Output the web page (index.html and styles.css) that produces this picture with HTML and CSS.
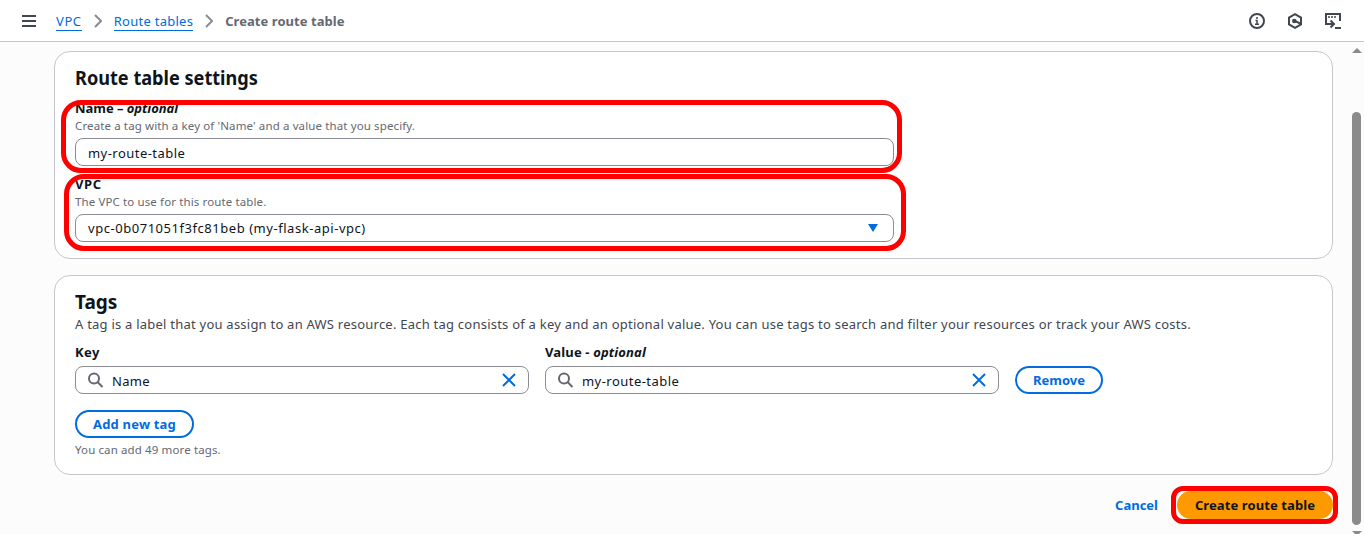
FILE: index.html
```html
<!DOCTYPE html>
<html lang="en">
<head>
<meta charset="utf-8">
<title>Create route table</title>
<link rel="stylesheet" href="styles.css">
</head>
<body>
<header class="topbar">
  <svg class="menu" width="14" height="12" viewBox="0 0 14 12"><path d="M0 1h14M0 6h14M0 11h14"/></svg>
  <nav class="crumbs">
    <a class="crumb-vpc" href="#">VPC</a>
    <svg width="8" height="14" viewBox="0 0 8 14"><path d="M1 1l6 6-6 6"/></svg>
    <a class="crumb-tables" href="#">Route tables</a>
    <svg width="8" height="14" viewBox="0 0 8 14"><path d="M1 1l6 6-6 6"/></svg>
    <span class="crumb-current">Create route table</span>
  </nav>
  <div class="tools">
    <svg width="16" height="16" viewBox="0 0 16 16"><circle cx="8" cy="8" r="7"/><path d="M8 4v2M6.500 7.500H8V12M6 11.300h4" stroke-width="1.500"/></svg>
    <svg width="16" height="16" viewBox="0 0 16 16"><path d="M14 11.400V4.600L8 1.200 2 4.600v6.800l6 3.400z"/><circle class="solid" cx="7.300" cy="8" r="2.300"/><path d="M8 8l5.500 2.700"/></svg>
    <svg width="16" height="16" viewBox="0 0 16 16"><path d="M5 11H1V1h14v7M10 15h6"/><path d="M3 4h2M6 4h2M9 4h2" stroke-width="1.600"/><path d="M4 11h5M5.500 7.500L9 11l-3.500 3.500"/></svg>
  </div>
</header>
<main class="content">
  <section class="card settings">
    <h2 class="title-settings">Route table settings</h2>
    <div class="field">
      <label class="label-name">Name – <i>optional</i></label>
      <p class="hint hint-name">Create a tag with a key of 'Name' and a value that you specify.</p>
      <div class="input"><span class="val-route">my-route-table</span></div>
    </div>
    <div class="field">
      <label class="label-vpc">VPC</label>
      <p class="hint hint-vpc">The VPC to use for this route table.</p>
      <div class="input select"><span class="val-vpc">vpc-0b071051f3fc81beb (my-flask-api-vpc)</span>
        <svg class="caret" width="10" height="8" viewBox="0 0 10 8"><path d="M0 0h10L5 8z"/></svg></div>
    </div>
    <div class="mark mark-name"></div>
    <div class="mark mark-vpc"></div>
  </section>
  <section class="card tags">
    <h2 class="title-tags">Tags</h2>
    <p class="desc">A tag is a label that you assign to an AWS resource. Each tag consists of a key and an optional value. You can use tags to search and filter your resources or track your AWS costs.</p>
    <div class="tag-row">
      <div class="tag-col">
        <label class="label-key">Key</label>
        <div class="input search">
          <svg class="glass" width="16" height="16" viewBox="0 0 16 16"><circle cx="6" cy="6.500" r="5"/><path d="M9.500 10l5 5"/></svg>
          <span class="val-name">Name</span>
          <svg class="clear" width="14" height="14" viewBox="0 0 14 14"><path d="M1 1l12 12M13 1L1 13"/></svg>
        </div>
      </div>
      <div class="tag-col">
        <label class="label-value">Value - <i>optional</i></label>
        <div class="input search">
          <svg class="glass" width="16" height="16" viewBox="0 0 16 16"><circle cx="6" cy="6.500" r="5"/><path d="M9.500 10l5 5"/></svg>
          <span class="val-route">my-route-table</span>
          <svg class="clear" width="14" height="14" viewBox="0 0 14 14"><path d="M1 1l12 12M13 1L1 13"/></svg>
        </div>
      </div>
      <button class="btn remove"><span>Remove</span></button>
    </div>
    <button class="btn add"><span>Add new tag</span></button>
    <p class="hint hint-more">You can add 49 more tags.</p>
  </section>
  <footer class="actions">
    <a class="cancel" href="#">Cancel</a>
    <button class="btn primary"><span>Create route table</span><i class="mark mark-create"></i></button>
  </footer>
</main>
<div class="scrollbar">
  <svg width="10" height="5" viewBox="0 0 10 5"><path d="M5 0l5 5H0z"/></svg>
  <div class="thumb"></div>
  <svg width="10" height="5" viewBox="0 0 10 5"><path d="M0 0h10L5 5z"/></svg>
</div>
</body>
</html>
```
FILE: styles.css
```css
* { box-sizing: border-box; margin: 0; }
body {
  height: 534px;
  overflow: hidden;
  background: #fcfcfd;
  color: #0f141a;
  font: 13px/20px "Noto Sans", "Open Sans", sans-serif;
  white-space: nowrap;
}
svg { display: block; flex: none; fill: none; }
a { color: #006ce0; text-decoration: none; }
.topbar {
  display: flex;
  align-items: center;
  height: 42px;
  padding: 0 23px 0 22px;
  background: #fff;
  border-bottom: 1px solid #c6c6cd;
}
.menu { stroke: #424650; stroke-width: 2; }
.crumbs { display: flex; align-items: center; gap: 12px; margin-left: 20px; }
.crumbs svg { stroke: #8c8c94; stroke-width: 2; }
.crumbs a { line-height: 17px; border-bottom: 1px solid #006ce0; margin-top: 2px; }
.crumb-vpc { letter-spacing: .6px; }
.crumb-tables { letter-spacing: .27px; }
.crumb-current { font-weight: 700; color: #656871; letter-spacing: .05px; }
.tools { display: flex; gap: 22px; margin-left: auto; stroke: #424650; stroke-width: 2; }
.tools .solid { fill: #424650; stroke: none; }

.content { padding: 9px 31px 0 54px; }
.card {
  position: relative;
  background: #fff;
  border: 1px solid #c6c6cd;
  border-radius: 16px;
  padding: 0 20px;
}
.settings { height: 208px; padding-top: 14px; }
h2 { font-size: 20px; line-height: 24px; font-weight: 700; transform-origin: left; }
.title-settings { transform: scaleX(.906); }
.title-tags { transform: scaleX(.95); }
.field { width: 819px; height: 76px; padding-top: 9px; }
label { display: block; font-weight: 700; }
.field label { line-height: 18px; }
.label-name { letter-spacing: -.04px; }
.label-vpc { letter-spacing: .6px; }
.label-key { letter-spacing: .4px; }
.label-value { letter-spacing: .15px; }
.hint { font-size: 11.5px; line-height: 16px; color: #656871; letter-spacing: .12px; }
.field .hint { padding-top: 1px; margin-bottom: 4px; }
.input {
  display: flex;
  align-items: center;
  height: 28px;
  padding: 2px 12px 0;
  background: #fff;
  border: 1px solid #8c8c94;
  border-radius: 8px;
}
.select { justify-content: space-between; padding: 0 15px 0 12px; }
.caret { fill: #006ce0; }
.val-route { letter-spacing: .46px; }
.val-vpc { letter-spacing: .54px; }
.val-name { letter-spacing: .3px; }

.tags { height: 200px; margin-top: 16px; padding-top: 14px; }
.desc { color: #424650; line-height: 20px; letter-spacing: .23px; }
.tag-row { display: flex; align-items: flex-end; gap: 16px; margin-top: 8px; }
.tag-col { width: 454px; }
.search { margin-top: 4px; padding-top: 0; }
.search span { padding-top: 2px; }
.glass { stroke: #656871; stroke-width: 2; margin-right: 8px; }
.clear { stroke: #006ce0; stroke-width: 2; margin-left: auto; }
.btn {
  display: flex;
  align-items: center;
  justify-content: center;
  height: 28px;
  padding: 0;
  background: #fff;
  border: 2px solid #006ce0;
  border-radius: 14px;
  color: #006ce0;
  font: 700 13px/20px "Noto Sans", "Open Sans", sans-serif;
}
.remove { width: 88px; }
.add { width: 119px; margin-top: 16px; letter-spacing: .18px; }
.hint-more { margin-top: 4px; }

.actions { display: flex; align-items: center; justify-content: flex-end; gap: 19px; margin-top: 16px; }
.cancel { font-weight: 700; }
.primary {
  position: relative;
  width: 156px;
  background: #ff9900;
  border: 0;
  color: #0f141a;
  letter-spacing: .1px;
}

/* Highlight outlines drawn over the form */
.mark { position: absolute; border: 5px solid #f00; pointer-events: none; }
.mark-name { left: 6px; top: 48px; width: 841px; height: 73px; border-radius: 20px; }
.mark-vpc { left: 9px; top: 122px; width: 842px; height: 77px; border-radius: 20px; }
.mark-create { left: -6px; top: -5px; width: 167px; height: 38px; border-radius: 12px; }

.scrollbar {
  position: absolute;
  top: 42px;
  right: 0;
  width: 16px;
  height: 492px;
  padding: 6px 0 0 4px;
}
.scrollbar svg { fill: #8b8b8b; }
.thumb { width: 9px; height: 413px; margin: 59px 0 6px; border-radius: 5px; background: #8b8b8b; }
```
